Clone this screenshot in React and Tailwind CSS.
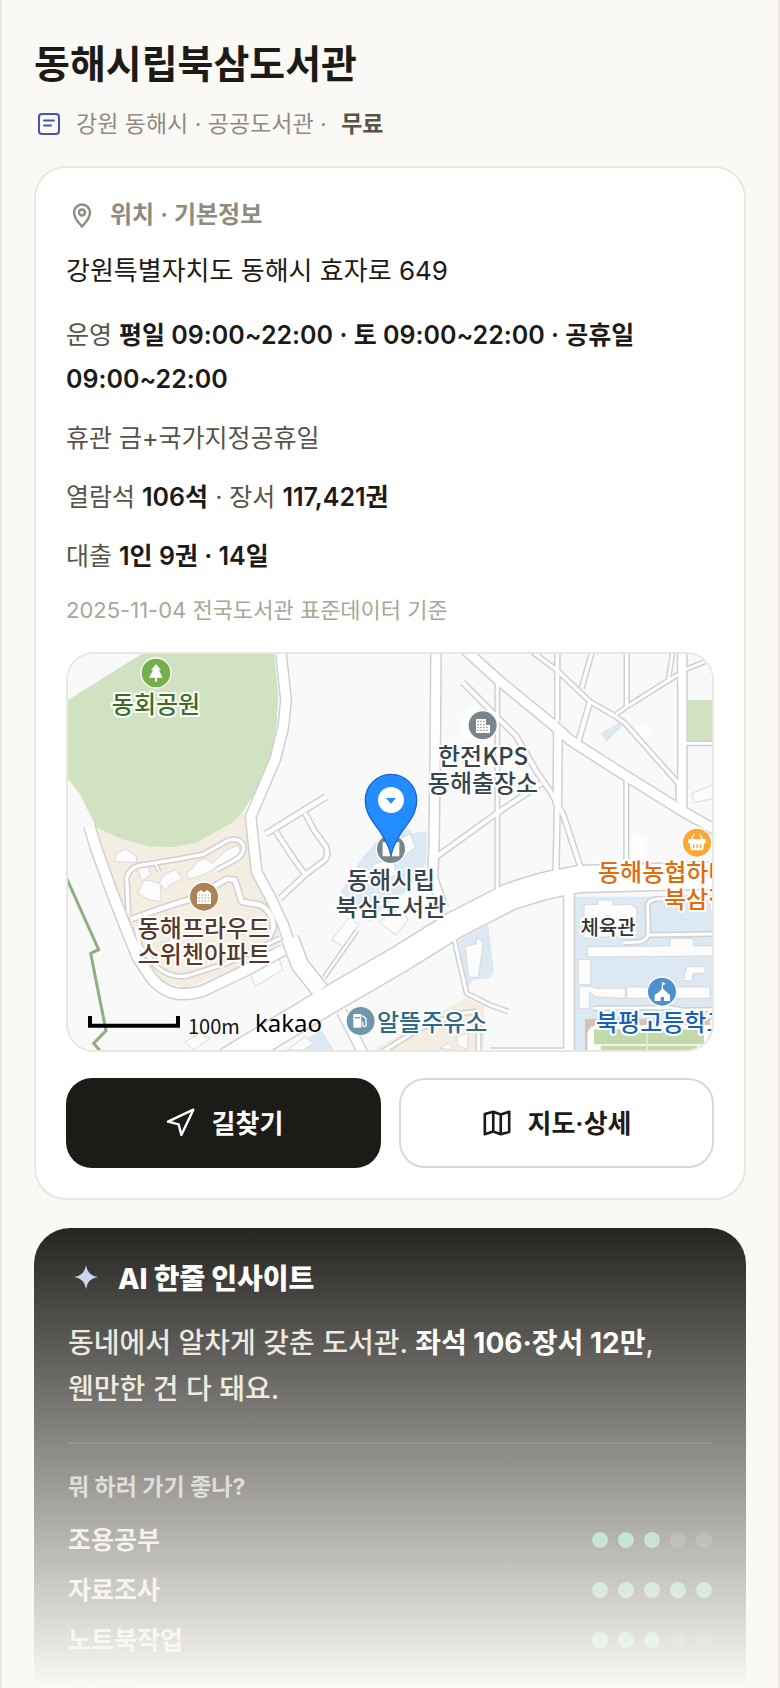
import { Navigation } from 'lucide-react';

// road centre lines, drawn at three units per map pixel
const roads = [
  { w: 28, d: 'M660 0L678 165 670 245 646 342 572 515 580 590 590 680 630 755 670 840 690 900' },
  { w: 48, d: 'M690 880L720 960 780 1035' },
  { w: 30, d: 'M88 543L105 600 155 740 204 865 233 937 275 1000Q315 1047 365 1047 400 1047 430 1037L560 975 670 915' },
  { w: 78, d: 'M500 1250L790 1075 1020 942 1180 842 1350 755Q1440 725 1490 715L1560 702 1700 698 2000 690' },
  { w: 27, d: 'M1128 0L1126 300 1122 600 1118 700 1150 790' },
  { w: 27, d: 'M1200 0L1315 105 1480 240 1530 285 1685 385 1870 500 1980 562' },
  { w: 9, d: 'M1312 110V760' },
  { w: 11, d: 'M1492 0V230' },
  { w: 22, d: 'M1494 240L1492 480' },
  { w: 14, d: 'M1492 470L1488 680' },
  { w: 10, d: 'M1390 0L1490 75 1590 170 1665 213 1695 235 1855 415V470' },
  { w: 10, d: 'M1602 0L1565 130' },
  { w: 10, d: 'M1700 0V185' },
  { w: 9, d: 'M1668 208L1700 185 1855 88' },
  { w: 8, d: 'M1842 0L1825 105' },
  { w: 24, d: 'M1867 0V490' },
  { w: 8, d: 'M1870 76L1980 32' },
  { w: 8, d: 'M1870 295H1980' },
  { w: 12, d: 'M1590 170L1555 290' },
  { w: 12, d: 'M1208 112L1330 235 1370 275 1430 380 1475 445 1510 510 1566 680' },
  { w: 12, d: 'M1130 635L1310 505 1445 415' },
  { w: 10, d: 'M1699 400V660' },
  { w: 14, d: 'M798 455L617 567' },
  { w: 12, d: 'M648 560L690 625 735 688' },
  { w: 12, d: 'M735 505L765 560 798 605Q806 630 795 645L735 690 660 760' },
  { w: 7, d: 'M792 998L892 855' },
  { w: 9, d: 'M1183 885L1220 1045 1290 1080 1345 1100' },
  { w: 28, d: 'M1527 745V1230' },
  { w: 26, d: 'M845 1100L912 1230' },
  { w: 10, d: 'M205 805L200 700Q203 675 235 662L350 643 430 628 500 588Q535 575 550 600 555 625 530 642L470 675' },
  { w: 14, d: 'M215 822L320 785 400 760 500 702 525 705 545 770 600 780Q640 800 640 850L625 880' },
  { w: 10, d: 'M228 845L240 905 290 965Q330 1000 380 993L500 955 660 880' },
  { w: 6, d: 'M285 655L298 680' },
  { w: 9, d: 'M1980 758L1790 762Q1760 765 1763 790L1765 860Q1765 885 1740 890L1690 893' },
  { w: 9, d: 'M1765 870L1980 867' },
  { w: 8, d: 'M1600 1090L1830 1088 1870 1095 1980 1093' },
  { w: 10, d: 'M960 1225L1080 1150 1200 1105 1250 1100' },
  { w: 10, d: 'M1256 1130V1240' },
  { w: 4, d: 'M1290 1213H1515' },
];

const buildings = [
  '163,650 170,625 196,612 228,632 230,653',
  '232,668 262,658 272,690 245,708',
  '232,745 255,705 300,715 305,770 270,765',
  '298,715 312,690 330,680 348,675 368,700 330,720 316,735',
  '378,685 400,668 410,650 436,640 455,655 500,615 535,600 545,635 480,660 440,685 388,703',
  '816,885 865,820 898,838 850,905',
  '957,830 1020,790 1045,825 1008,870',
  '570,985 655,935 668,975 585,1025',
  '375,1190 420,1165 450,1180 400,1215',
  '680,1215 735,1175 760,1195 730,1215',
  '1010,590 1050,565 1066,605 1032,635',
  '935,660 1000,640 1010,690 960,710',
  '1215,905 1247,897 1250,880 1263,882 1265,892 1270,893 1255,997 1227,997',
  '1895,445 1960,418 1960,460 1903,473',
  '1572,780 1612,778 1614,765 1658,765 1658,780 1712,778 1730,790 1730,870 1572,880',
  '1582,905 1830,903 1830,880 1900,880 1900,903 1970,903 1970,933 1582,936',
  '1555,944 1592,944 1592,1018 1555,1018',
  '1557,1025 1595,1025 1605,1030 1696,1030 1696,1060 1605,1055 1588,1040 1588,1090 1557,1090',
  '1698,1026 1950,1026 1950,1060 1700,1060',
  '1880,965 1935,965 1935,985 1900,985 1895,1008 1870,1006',
  '1188,1175 1225,1165 1222,1215 1195,1200',
  '1140,1210 1165,1195 1185,1215',
  '300,895 345,880 350,905 310,920',
  '520,840 580,815 600,850 540,870',
];

const labels = [
  { x: 96, y: 68, fill: '#3c6e24', text: '동회공원' },
  { x: 423, y: 120, fill: '#36454d', text: '한전KPS' },
  { x: 423, y: 147, fill: '#36454d', text: '동해출장소' },
  { x: 331, y: 244, fill: '#36454d', text: '동해시립' },
  { x: 331, y: 271, fill: '#36454d', text: '북삼도서관' },
  { x: 144, y: 292, fill: '#5a3828', text: '동해프라우드' },
  { x: 144, y: 318, fill: '#5a3828', text: '스위첸아파트' },
];

const edgeLabels = [
  { x: 317, y: 386, fill: '#2d6b87', text: '알뜰주유소' },
  { x: 538, y: 236, fill: '#e06c0c', text: '동해농협하나로마트' },
  { x: 604, y: 263, fill: '#e06c0c', text: '북삼점' },
  { x: 536, y: 386, fill: '#1862b6', text: '북평고등학교' },
];

const uses = [
  { name: '조용공부', score: 3 },
  { name: '자료조사', score: 5 },
  { name: '노트북작업', score: 3 },
  { name: '아이랑', score: 4 },
];

function KakaoMap() {
  return (
    <svg
      viewBox="8 9 644 396"
      preserveAspectRatio="xMidYMid slice"
      className="block w-full h-full font-['Noto_Sans_CJK_KR',sans-serif]"
      role="img"
      aria-label="지도"
    >
      <rect x="0" y="0" width="660" height="414" fill="#f9f9f9" />
      <g transform="scale(.33333)">
        <path fill="#f3ede2" d="M110 548L340 600 515 530 550 495 560 560 572 640 590 700 635 800 665 890 560 960 380 1028 310 1012 250 940 215 850 190 800 150 690z" />
        <path fill="#d0e2c1" d="M24 165L245 27H642L655 150 650 240 630 340 580 450 548 500 515 535 408 593 340 606 265 604 185 582 110 548 60 448 24 402z" />
        <path fill="#d0e2c1" d="M1883 165H1965V288H1883z" />
        <path fill="#dde9f2" d="M975 560L1035 540 1060 565 1100 558V650L1040 740 985 775 930 830 905 800 842 740 905 640z" />
        <path fill="#dde9f2" d="M1195 885L1285 840 1302 980 1290 1000 1240 1005 1222 1028z" />
        <path fill="#dde9f2" d="M1545 755H1980V1230H1545z" />
        <path fill="#dde9f2" d="M680 1215L785 1155 822 1215z" />
        <path fill="#dde9f2" d="M1622 265L1675 233 1688 243 1640 290z" />
        <path fill="#f3ede2" d="M940 1215L1220 1058 1272 1085V1215z" />
        <path fill="#d7c1b5" d="M1575 1122H1970V1220H1575z" />
        <path fill="#fdfdfd" d="M1582 1230V1165Q1585 1145 1610 1140H1960V1230z" />
        <path fill="#c3d9ac" d="M1602 1153H1932V1198H1602zM1622 1202H1912V1220H1622z" />
        <path stroke="#e3eed8" strokeWidth="4" d="M1762 1150V1220" />
        <path fill="#fdfdfd" d="M1235 180L1300 235 1215 290 1195 230zM1725 250L1755 230 1778 270 1750 285zM1700 560L1760 575 1755 640H1700z" />
        {buildings.map((points) => (
          <polygon key={points} points={points} fill="#fcfcfd" stroke="#d9d9d9" strokeWidth="3" />
        ))}
        <g fill="none" stroke="#d0d0d0" strokeLinejoin="round">
          {roads.map((r) => (
            <path key={r.d} d={r.d} strokeWidth={r.w + 9} />
          ))}
        </g>
        <g fill="none" stroke="#fff" strokeLinejoin="round">
          {roads.map((r) => (
            <path key={r.d} d={r.d} strokeWidth={r.w} />
          ))}
        </g>
        <path fill="none" stroke="#8fae83" strokeWidth="9" d="M20 700L116 914 92 925 138 1157 101 1195 122 1220" />

        <g stroke="#fff" strokeWidth="4">
          <circle cx="288" cy="84" r="45" fill="#76b04a" />
          <circle cx="1268" cy="241" r="44" fill="#78868c" />
          <circle cx="432" cy="755" r="44" fill="#ac8453" />
          <circle cx="993" cy="612" r="44" fill="#78868c" />
          <circle cx="902" cy="1128" r="44" fill="#6f96aa" />
          <circle cx="1911" cy="593" r="44" fill="#fba733" />
          <circle cx="1806" cy="1040" r="44" fill="#4f91cf" />
        </g>
        <g fill="#fff">
          <path d="M288 57L303 76H297L308 98H291V110H285V98H267L279 76H273z" />
          <path d="M1248 222H1278V240H1290V264H1248z" />
          <path d="M411 745L422 735 432 742 442 735 453 745V777H411z" />
          <path d="M968 592H990V634H968zM996 592H1018V634H996z" />
          <path d="M880 1107H904V1148H880z" />
          <path d="M1885 583H1937V595H1933L1929 616H1893L1889 595H1885z" />
          <path d="M1784 1068V1050L1796 1042 1808 1030 1820 1042 1830 1050V1068H1812V1056H1802V1068zM1806 1010L1818 1017 1809 1020V1034H1805z" />
        </g>
        <g fill="none" stroke="#fff" strokeWidth="4">
          <path d="M906 1112L918 1120V1142Q912 1148 908 1140V1130" />
          <path d="M1894 585L1902 568M1928 585L1920 568" />
        </g>
        <path stroke="#78868c" strokeWidth="4" strokeDasharray="4 5" d="M1252 229H1276M1252 238H1276M1252 247H1288M1252 256H1288" />
        <path stroke="#ac8453" strokeWidth="3" strokeDasharray="4 5" d="M416 750H450M416 759H450M416 768H450" />
        <path stroke="#fba733" strokeWidth="4" d="M1901 598V610M1911 598V610M1921 598V610" />
        <path stroke="#6f96aa" strokeWidth="4" d="M884 1118H900" />

        <path
          fill="#238cff"
          stroke="#1763d6"
          strokeWidth="4"
          d="M993 630C985 595 962 560 940 532 925 512 916 492 916 465A77 77 0 0 1 1070 465C1070 492 1061 512 1046 532 1024 560 1001 595 993 630z"
        />
        <circle cx="993" cy="465" r="39" fill="#fff" />
        <path fill="#238cff" d="M978 459H1008L993 476z" />
        <path fill="none" stroke="#000" strokeWidth="12" d="M90 1113V1142H354V1113" />
      </g>
      <g fontSize="24" fontWeight="500" stroke="#fff" strokeWidth="4" strokeLinejoin="round" paintOrder="stroke">
        {labels.map((l) => (
          <text key={l.text} x={l.x} y={l.y} fill={l.fill} textAnchor="middle">{l.text}</text>
        ))}
        {edgeLabels.map((l) => (
          <text key={l.text} x={l.x} y={l.y} fill={l.fill}>{l.text}</text>
        ))}
        <text x="548" y="290" fontSize="20" fill="#333" textAnchor="middle">체육관</text>
      </g>
      <text x="128" y="389" fontSize="20" fill="#111">100m</text>
      <text x="195" y="387" fontSize="24" fill="#000" className="font-['Noto_Sans',sans-serif]">kakao</text>
    </svg>
  );
}

function Dots({ score }) {
  return (
    <div className="flex gap-[10px]">
      {[1, 2, 3, 4, 5].map((n) => (
        <span key={n} className={`w-4 h-4 rounded-full ${n <= score ? 'bg-[#57b28b]' : 'bg-white/15'}`} />
      ))}
    </div>
  );
}

export default function App() {
  return (
    <div className="relative h-screen overflow-hidden border-x-2 border-[#e9e7e0] bg-[#faf9f5] px-8 pt-[38px] text-[#1c1b17] font-['Inter','Noto_Sans_CJK_KR',sans-serif]">
      <header>
        <h1 className="text-[39px] leading-[52px] font-bold">동해시립북삼도서관</h1>
        <div className="mt-4 flex items-center gap-3 text-[23px] leading-9 text-[#8f8b7f]">
          <svg viewBox="0 0 30 30" className="w-[30px] h-[30px]" fill="none" stroke="#4059ad" strokeWidth="2" strokeLinecap="round">
            <rect x="5" y="5" width="20" height="20" rx="3" />
            <path d="M10 11.5h10M10 16.5h7" />
          </svg>
          <p>
            강원 동해시 · 공공도서관 · <b className="ml-2 font-semibold text-[#57544a]">무료</b>
          </p>
        </div>
      </header>

      <section className="mt-6 rounded-[32px] border-2 border-[#e9e7e0] bg-white px-[30px] pt-[29px] pb-[30px]">
        <h2 className="flex items-center gap-3 text-2xl leading-9 font-semibold text-[#8f8b7f]">
          <svg viewBox="0 0 32 32" className="w-8 h-8" fill="none" stroke="currentColor" strokeWidth="2.4">
            <path d="M16 27.5c-1.5-2-8-7.5-8-14a8 8 0 0 1 16 0c0 6.5-6.5 12-8 14z" />
            <circle cx="16" cy="13.5" r="3" />
          </svg>
          위치 · 기본정보
        </h2>
        <p className="mt-4 text-[26px] leading-[44px]">강원특별자치도 동해시 효자로 649</p>
        <div className="mt-5 flex flex-col gap-[15px] text-[25px] leading-[44px] text-[#57544a] [&_b]:font-semibold [&_b]:text-[#1c1b17]">
          <p>운영 <b>평일 09:00~22:00 · 토 09:00~22:00 · 공휴일 09:00~22:00</b></p>
          <p>휴관 금+국가지정공휴일</p>
          <p>열람석 <b>106석</b> · 장서 <b>117,421권</b></p>
          <p>대출 <b>1인 9권 · 14일</b></p>
        </div>
        <p className="mt-4 text-[22px] leading-8 text-[#aaa699]">2025-11-04 전국도서관 표준데이터 기준</p>

        <div className="mt-[26px] h-[400px] overflow-hidden rounded-[28px] border-2 border-[#e9e7e0]">
          <KakaoMap />
        </div>

        <div className="mt-[26px] grid grid-cols-2 gap-[18px] text-[26px] font-semibold">
          <button className="flex h-[90px] items-center justify-center gap-4 rounded-[26px] bg-[#1c1b17] text-white">
            <Navigation size={32} strokeWidth={1.8} />
            길찾기
          </button>
          <button className="flex h-[90px] items-center justify-center gap-4 rounded-[26px] border-2 border-[#dcd9d0] bg-white">
            <svg viewBox="0 0 32 32" className="w-[30px] h-[30px]" fill="none" stroke="currentColor" strokeWidth="2.8" strokeLinejoin="round">
              <path d="M3 6.500l9-2.500 8 3 9-3v21.500l-9 2.500-8-3-9 3zM12 4v21M20 7v21" />
            </svg>
            지도·상세
          </button>
        </div>
      </section>

      <section className="mt-7 rounded-[36px] bg-[#1c1b17] px-[34px] pt-[33px] pb-10 text-[#e6e2d8]">
        <h2 className="flex items-center gap-[14px] text-[28px] leading-9 font-extrabold text-white">
          <svg viewBox="0 0 36 36" className="w-9 h-9" fill="#c4ceed">
            <path d="M18 4q1.500 10.500 12 12-10.500 1.500-12 12-1.500-10.500-12-12 10.500-1.500 12-12z" />
          </svg>
          AI 한줄 인사이트
        </h2>
        <p className="mt-[23px] text-[28px] leading-[46px] font-medium">
          동네에서 알차게 갖춘 도서관. <b className="font-bold text-white">좌석 106·장서 12만</b>,<br />
          웬만한 건 다 돼요.
        </p>
        <div className="mt-[30px] border-t-2 border-white/10 pt-7">
          <h3 className="text-[23px] leading-[30px] font-bold text-[#bcb9ae]">뭐 하러 가기 좋나?</h3>
          <ul className="mt-[13px] text-[25px] leading-[50px] font-semibold">
            {uses.map((u) => (
              <li key={u.name} className="flex items-center justify-between">
                {u.name}
                <Dots score={u.score} />
              </li>
            ))}
          </ul>
        </div>
      </section>

      <div className="pointer-events-none absolute -inset-x-[2px] bottom-0 h-[480px] bg-linear-to-b from-[#faf9f5]/0 to-[#faf9f5]" />
    </div>
  );
}
